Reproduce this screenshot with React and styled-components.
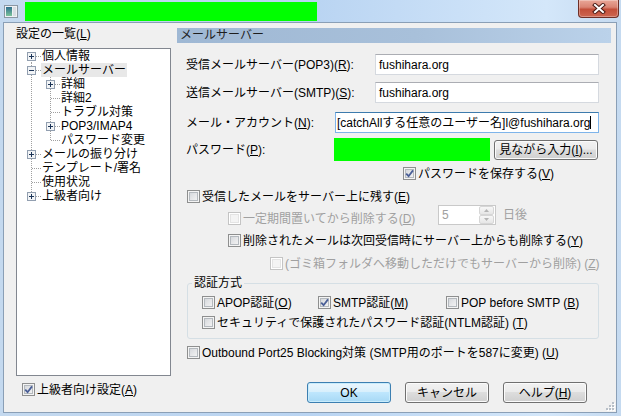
import React from 'react'
import styled, { createGlobalStyle } from 'styled-components'

const GlobalStyle = createGlobalStyle`
  html, body {
    margin: 0;
    padding: 0;
  }
  body {
    width: 621px;
    height: 416px;
    overflow: hidden;
    font-family: "Liberation Sans", "Noto Sans CJK JP", sans-serif;
    font-size: 12px;
    line-height: 14px;
    color: #000;
  }
  u {
    text-underline-offset: 1px;
  }
`

const Window = styled.div`
    width: 621px;
    height: 416px;
    box-sizing: border-box;
    padding: 0 4px 3px 3px;
    display: flex;
    flex-direction: column;
    background: linear-gradient(to right, #c4d9ef 0%, #b9d4f2 50%, #d4e7fa 88%, #c5daf0 100%);
`
const TitleBar = styled.div`
    height: 22px;
    flex: none;
    display: flex;
    align-items: flex-start;
    padding-left: 1px;
`
const AppIcon = styled.svg`
    display: block;
    flex: none;
    margin-top: 5px;
`
const TitleMask = styled.div`
    margin: 2px 0 0 7px;
    width: 292px;
    height: 19px;
    background: #00ff00;
`
const CloseButton = styled.div`
    margin: 0 -2px 0 auto;
    width: 41px;
    height: 18px;
    box-sizing: border-box;
    border: 1px solid #6e2f27;
    border-top: none;
    border-radius: 0 0 4px 4px;
    background: linear-gradient(#e9a798 0%, #da8473 42%, #c34f3a 55%, #cd6651 100%);
    box-shadow: inset 0 0 0 1px rgba(255, 255, 255, 0.3);
    display: flex;
    align-items: center;
    justify-content: center;
`
const Client = styled.div`
    position: relative;
    flex: 1;
    display: flex;
    background: #f0f0f0;
    border: 1px solid #8a9fb6;
`
const LeftPane = styled.div`
    width: 173px;
    flex: none;
    box-sizing: border-box;
    padding: 4px 0 0 12px;
    display: flex;
    flex-direction: column;
`
const PaneLabel = styled.div`
    height: 14px;
`
const TreeBox = styled.div`
    margin-top: 7px;
    width: 155px;
    height: 328px;
    box-sizing: border-box;
    border: 1px solid #828790;
    background: #fff;
    padding-left: 5px;
`
const TreeRow = styled.div`
    display: flex;
    height: 14px;
    align-items: center;
    white-space: nowrap;
`
const GuideSvg = styled.svg`
    display: block;
    flex: none;
`
const TreeLabel = styled.span`
    padding: 0 1px;
    height: 14px;
    line-height: 14px;
    background: ${p => (p.$selected ? '#e8e8e8' : 'transparent')};
`
const RightPane = styled.div`
    width: 434px;
    flex: none;
    box-sizing: border-box;
    padding-top: 5px;
    display: flex;
    flex-direction: column;
`
const SectionHeader = styled.div`
    height: 15px;
    line-height: 15px;
    padding-left: 3px;
    color: #1e1e1e;
    background: linear-gradient(to right, #9fb8d4 0%, #a8c0da 55%, #bbd2ea 100%);
`
const FieldRow = styled.div`
    display: flex;
    align-items: center;
    flex: none;
    height: ${p => p.$h}px;
    margin-top: ${p => p.$top}px;
    margin-left: ${p => p.$indent || 0}px;
`
const FieldLabel = styled.div`
    width: ${p => p.$w}px;
    flex: none;
    box-sizing: border-box;
    padding-left: 9px;
    white-space: nowrap;
`
const TextBox = styled.div`
    width: ${p => p.$w}px;
    height: 21px;
    flex: none;
    box-sizing: border-box;
    border: 1px solid ${p => (p.$focused ? '#7eb4ea' : '#d5d9df')};
    border-top-color: ${p => (p.$focused ? '#3d7bad' : '#abadb3')};
    background: #fff;
    padding-left: ${p => p.$pad}px;
    display: flex;
    align-items: center;
    overflow: hidden;
    white-space: nowrap;
`
const Caret = styled.span`
    width: 1px;
    height: 13px;
    flex: none;
    background: #000;
`
const HiddenPassword = styled.div`
    width: 156px;
    height: 23px;
    flex: none;
    background: #00ff00;
`
const PushButton = styled.div`
    width: ${p => p.$w}px;
    height: ${p => p.$h}px;
    margin-left: ${p => p.$ml || 0}px;
    flex: none;
    box-sizing: border-box;
    border: 1px solid ${p => (p.$default ? '#3c7fb1' : '#707070')};
    border-radius: 3px;
    background: ${p =>
        p.$default
            ? 'linear-gradient(#eaf6fd 0%, #d9f0fc 45%, #bee6fd 50%, #a7d9f5 100%)'
            : 'linear-gradient(#f2f2f2 0%, #ebebeb 45%, #dddddd 50%, #cfcfcf 100%)'};
    box-shadow: inset 0 0 0 1px ${p => (p.$default ? '#c8ecfc' : '#fbfbfb')};
    display: flex;
    align-items: center;
    justify-content: center;
    white-space: nowrap;
`
const CheckRow = styled.div`
    display: flex;
    align-items: center;
    flex: none;
    height: ${p => p.$h || 13}px;
    margin-top: ${p => p.$top || 0}px;
    margin-left: ${p => p.$indent || 0}px;
    width: ${p => (p.$w ? `${p.$w}px` : 'auto')};
    color: ${p => (p.$disabled ? '#a0a0a0' : '#000')};
    white-space: nowrap;
`
const CheckBox = styled.span`
    width: 13px;
    height: 13px;
    flex: none;
    box-sizing: border-box;
    margin-right: 2px;
    display: flex;
    align-items: center;
    justify-content: center;
    border: 1px solid ${p => (p.$disabled ? '#c4c4c4' : '#8e8f8f')};
    background: ${p =>
        p.$disabled ? '#f4f4f4' : 'linear-gradient(135deg, #cdd1d6 0%, #e5e6e8 50%, #f8f8f8 100%)'};
    box-shadow: inset 0 0 0 1px ${p => (p.$disabled ? '#ffffff' : '#f4f4f4')},
        inset 0 0 0 2px ${p => (p.$disabled ? '#e4e4e4' : '#b4b9be')};
`
const SpinBox = styled.div`
    align-self: flex-start;
    width: 58px;
    height: 20px;
    flex: none;
    box-sizing: border-box;
    border: 1px solid #c9c9c9;
    background: #fff;
    padding: 0 1px 0 3px;
    display: flex;
    align-items: center;
    color: #a0a0a0;
`
const SpinValue = styled.span`
    flex: 1;
`
const SpinButtons = styled.div`
    width: 15px;
    height: 18px;
    display: flex;
    flex-direction: column;
`
const SpinButton = styled.div`
    flex: 1;
    box-sizing: border-box;
    border: 1px solid #d6d6d6;
    border-radius: 2px;
    background: linear-gradient(#f7f7f7, #e6e6e6);
    display: flex;
    align-items: center;
    justify-content: center;
`
const Suffix = styled.span`
    align-self: flex-start;
    height: 20px;
    line-height: 20px;
    margin-left: 7px;
    color: #a0a0a0;
`
const Group = styled.fieldset`
    margin: 6px 0 0 10px;
    width: 412px;
    min-inline-size: 0;
    box-sizing: border-box;
    padding: 6px 0 9px 4px;
    border: 1px solid #d5dfe5;
    border-radius: 3px;
`
const GroupTitle = styled.legend`
    padding: 0 2px;
    height: 14px;
    line-height: 14px;
`
const GroupRow = styled.div`
    display: flex;
    align-items: center;
    margin: ${p => p.$top || 0}px 0 0 10px;
`
const ButtonRow = styled.div`
    display: flex;
    justify-content: flex-end;
    gap: 14px;
    margin-top: 23px;
    padding-right: 24px;
`
const Grip = styled.svg`
    position: absolute;
    right: 1px;
    bottom: 1px;
    display: block;
`

const treeItems = [
    { label: '個人情報', cells: ['first'], exp: 'plus' },
    { label: 'メールサーバー', cells: ['tee'], exp: 'minus', selected: true },
    { label: '詳細', cells: ['pass', 'tee'], exp: 'plus' },
    { label: '詳細2', cells: ['pass', 'tee'] },
    { label: 'トラブル対策', cells: ['pass', 'tee'] },
    { label: 'POP3/IMAP4', cells: ['pass', 'tee'], exp: 'plus' },
    { label: 'パスワード変更', cells: ['pass', 'last'] },
    { label: 'メールの振り分け', cells: ['tee'], exp: 'plus' },
    { label: 'テンプレート/署名', cells: ['tee'] },
    { label: '使用状況', cells: ['tee'] },
    { label: '上級者向け', cells: ['last'], exp: 'plus' },
]

const dot = { stroke: '#a0a0a0', strokeDasharray: '1 1', shapeRendering: 'crispEdges' }

const Guide = ({ type, exp }) => (
    <GuideSvg width="19" height="14" viewBox="0 0 19 14">
        {type === 'pass' && <line x1="9.5" y1="0" x2="9.5" y2="14" {...dot} />}
        {type === 'tee' && <line x1="9.5" y1="0" x2="9.5" y2="14" {...dot} />}
        {type === 'last' && <line x1="9.5" y1="0" x2="9.5" y2="8" {...dot} />}
        {type === 'first' && <line x1="9.5" y1="7" x2="9.5" y2="14" {...dot} />}
        {type !== 'pass' && <line x1="10" y1="7.5" x2="19" y2="7.5" {...dot} />}
        {exp && (
            <g shapeRendering="crispEdges">
                <rect x="5.5" y="3.5" width="8" height="8" fill="#f2f4f6" stroke="#929fb0" />
                <line x1="7" y1="7.5" x2="12" y2="7.5" stroke="#1c3457" />
                {exp === 'plus' && <line x1="9.5" y1="5" x2="9.5" y2="10" stroke="#1c3457" />}
            </g>
        )}
    </GuideSvg>
)

const CheckMark = () => (
    <svg width="9" height="9" viewBox="0 0 9 9">
        <path d="M1.2 4.6 L3.6 7.2 L8 1.4" fill="none" stroke="#4a5f97" strokeWidth="1.8" />
    </svg>
)

const Check = ({ checked, disabled, children, ...rest }) => (
    <CheckRow $disabled={disabled} {...rest}>
        <CheckBox $disabled={disabled}>{checked && <CheckMark />}</CheckBox>
        <span>{children}</span>
    </CheckRow>
)

const Arrow = ({ up }) => (
    <svg width="5" height="3" viewBox="0 0 5 3">
        <path d={up ? 'M0 3 L2.5 0 L5 3 Z' : 'M0 0 L2.5 3 L5 0 Z'} fill="#b4b4b4" />
    </svg>
)

export default function App() {
    return (
        <>
            <GlobalStyle />
            <Window>
                <TitleBar>
                    <AppIcon width="14" height="13" viewBox="0 0 14 13">
                        <defs>
                            <linearGradient id="ig" x1="0" y1="0" x2="0" y2="1">
                                <stop offset="0" stopColor="#2f6f8f" />
                                <stop offset="1" stopColor="#7cc49a" />
                            </linearGradient>
                        </defs>
                        <rect x="0.5" y="0.5" width="13" height="12" fill="#eef1f4" stroke="#8b97a3" />
                        <rect x="2" y="2" width="6" height="9" fill="url(#ig)" />
                        <rect x="9" y="2" width="3" height="9" fill="#d9dee3" />
                    </AppIcon>
                    <TitleMask />
                    <CloseButton>
                        <svg width="14" height="11" viewBox="0 0 14 11">
                            <path d="M3 2 L11 9 M11 2 L3 9" stroke="#4a1a14" strokeWidth="4" strokeLinecap="square" />
                            <path d="M3 2 L11 9 M11 2 L3 9" stroke="#ffffff" strokeWidth="2" strokeLinecap="square" />
                        </svg>
                    </CloseButton>
                </TitleBar>
                <Client>
                    <LeftPane>
                        <PaneLabel>
                            設定の一覧(<u>L</u>)
                        </PaneLabel>
                        <TreeBox>
                            {treeItems.map(item => (
                                <TreeRow key={item.label}>
                                    {item.cells.map((c, i) => (
                                        <Guide
                                            key={i}
                                            type={c}
                                            exp={i === item.cells.length - 1 ? item.exp : null}
                                        />
                                    ))}
                                    <TreeLabel $selected={item.selected}>{item.label}</TreeLabel>
                                </TreeRow>
                            ))}
                        </TreeBox>
                        <Check checked $top={7} $indent={6}>
                            上級者向け設定(<u>A</u>)
                        </Check>
                    </LeftPane>
                    <RightPane>
                        <SectionHeader>メールサーバー</SectionHeader>
                        <FieldRow $h={21} $top={11}>
                            <FieldLabel $w={198}>
                                受信メールサーバー(POP3)(<u>R</u>):
                            </FieldLabel>
                            <TextBox $w={224} $pad={3}>
                                fushihara.org
                            </TextBox>
                        </FieldRow>
                        <FieldRow $h={21} $top={7}>
                            <FieldLabel $w={198}>
                                送信メールサーバー(SMTP)(<u>S</u>):
                            </FieldLabel>
                            <TextBox $w={224} $pad={3}>
                                fushihara.org
                            </TextBox>
                        </FieldRow>
                        <FieldRow $h={21} $top={9}>
                            <FieldLabel $w={158}>
                                メール・アカウント(<u>N</u>):
                            </FieldLabel>
                            <TextBox $w={264} $pad={1} $focused>
                                [catchAllする任意のユーザー名]l@fushihara.org
                                <Caret />
                            </TextBox>
                        </FieldRow>
                        <FieldRow $h={23} $top={5}>
                            <FieldLabel $w={157}>
                                パスワード(<u>P</u>):
                            </FieldLabel>
                            <HiddenPassword />
                            <PushButton $w={104} $h={20} $ml={4}>
                                見ながら入力(<u>I</u>)...
                            </PushButton>
                        </FieldRow>
                        <Check checked $top={6} $indent={226}>
                            パスワードを保存する(<u>V</u>)
                        </Check>
                        <Check $top={10} $indent={10}>
                            受信したメールをサーバー上に残す(<u>E</u>)
                        </Check>
                        <FieldRow $h={27} $top={2} $indent={51}>
                            <Check disabled $h={27} $w={210}>
                                一定期間置いてから削除する(<u>D</u>)
                            </Check>
                            <SpinBox>
                                <SpinValue>5</SpinValue>
                                <SpinButtons>
                                    <SpinButton>
                                        <Arrow up />
                                    </SpinButton>
                                    <SpinButton>
                                        <Arrow />
                                    </SpinButton>
                                </SpinButtons>
                            </SpinBox>
                            <Suffix>日後</Suffix>
                        </FieldRow>
                        <Check $top={2} $indent={51}>
                            削除されたメールは次回受信時にサーバー上からも削除する(<u>Y</u>)
                        </Check>
                        <Check disabled $top={10} $indent={93}>
                            (ゴミ箱フォルダへ移動しただけでもサーバーから削除) (<u>Z</u>)
                        </Check>
                        <Group>
                            <GroupTitle>認証方式</GroupTitle>
                            <GroupRow>
                                <Check $w={116}>
                                    APOP認証(<u>O</u>)
                                </Check>
                                <Check checked $w={128}>
                                    SMTP認証(<u>M</u>)
                                </Check>
                                <Check>
                                    POP before SMTP (<u>B</u>)
                                </Check>
                            </GroupRow>
                            <GroupRow $top={7}>
                                <Check>
                                    セキュリティで保護されたパスワード認証(NTLM認証) (<u>T</u>)
                                </Check>
                            </GroupRow>
                        </Group>
                        <Check $top={7} $indent={10}>
                            Outbound Port25 Blocking対策 (SMTP用のポートを587に変更) (<u>U</u>)
                        </Check>
                        <ButtonRow>
                            <PushButton $w={84} $h={21} $default>
                                OK
                            </PushButton>
                            <PushButton $w={84} $h={21}>
                                キャンセル
                            </PushButton>
                            <PushButton $w={84} $h={21}>
                                ヘルプ(<u>H</u>)
                            </PushButton>
                        </ButtonRow>
                    </RightPane>
                    <Grip width="10" height="10" viewBox="0 0 10 10">
                        {[
                            [7, 1],
                            [4, 4],
                            [7, 4],
                            [1, 7],
                            [4, 7],
                            [7, 7],
                        ].map(([x, y]) => (
                            <g key={`${x}-${y}`}>
                                <rect x={x + 1} y={y + 1} width="2" height="2" fill="#ffffff" />
                                <rect x={x} y={y} width="2" height="2" fill="#b8bfc7" />
                            </g>
                        ))}
                    </Grip>
                </Client>
            </Window>
        </>
    )
}
